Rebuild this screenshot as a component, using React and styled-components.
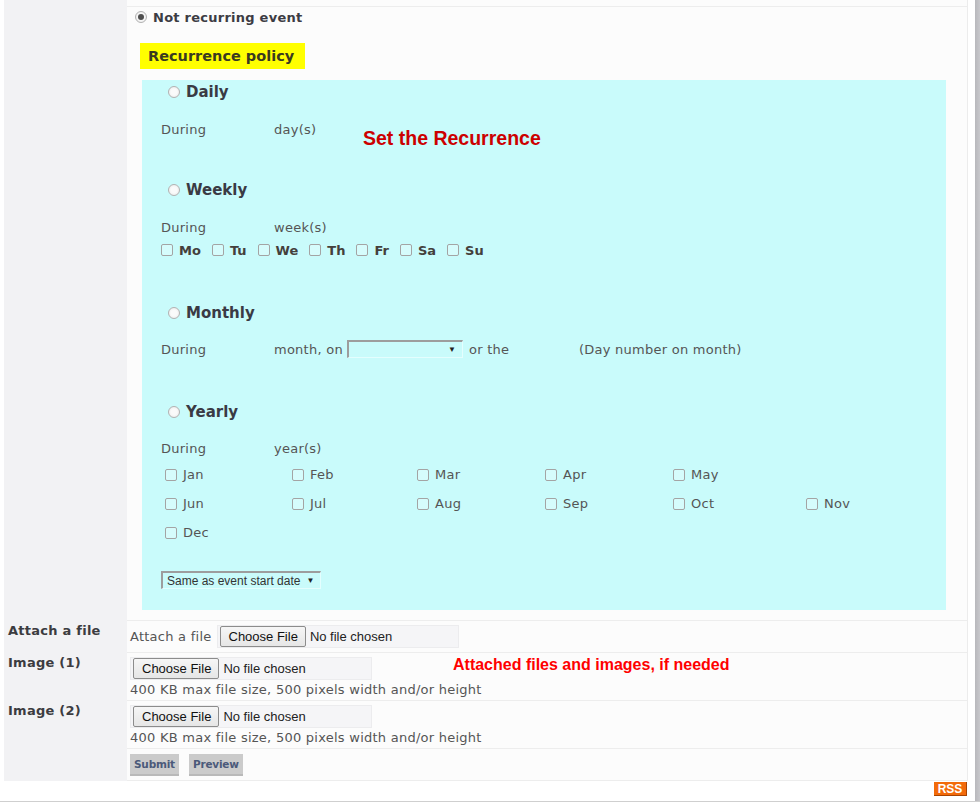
import React from "react";
import styled, { createGlobalStyle } from "styled-components";

const GlobalStyle = createGlobalStyle`
  html, body {
    margin: 0;
    padding: 0;
    background: #fff;
  }
  body {
    font-family: "DejaVu Sans", Verdana, sans-serif;
    font-size: 13px;
    letter-spacing: 0.25px;
    color: #555;
  }
`;

const Page = styled.div`
  display: flex;
  width: 980px;
  height: 801px;
  border-bottom: 1px solid #cfcfcf;
  overflow: hidden;
`;

const Content = styled.div`
  display: flex;
  flex-direction: column;
  width: 971px;
  padding-left: 4px;
  box-sizing: border-box;
`;

const ScrollEdge = styled.div`
  width: 5px;
  margin-left: 4px;
  background: linear-gradient(to right, #b8b8bc, #c8c8cc);
`;

const Table = styled.div`
  display: grid;
  grid-template-columns: 123px 1fr;
  width: 964px;
  border-right: 1px solid #ececec;
  box-sizing: border-box;
`;

const LabelCell = styled.div`
  background: #f2f2f4;
  padding: 2px 4px 0;
  font-weight: bold;
  color: #3c3c40;
  line-height: 18px;
  height: ${(p) => (p.$h ? `${p.$h}px` : "auto")};
  box-sizing: border-box;
`;

const ValueCell = styled.div`
  background: #fcfcfc;
  border-top: ${(p) => (p.$first ? "none" : "1px solid #ededed")};
  border-bottom: ${(p) => (p.$last ? "1px solid #ededed" : "none")};
  height: ${(p) => (p.$h ? `${p.$h}px` : "auto")};
  box-sizing: border-box;
`;

const Inner = styled.div`
  padding: ${(p) => p.$pad || "0"};
  display: ${(p) => (p.$flex ? "flex" : "block")};
  align-items: ${(p) => p.$align || "stretch"};
  gap: ${(p) => p.$gap || "0"};
`;

const RadioBox = styled.input.attrs({ type: "radio" })`
  appearance: none;
  margin: 0;
  width: 12px;
  height: 12px;
  border-radius: 50%;
  border: 1px solid #b2b2b2;
  background: radial-gradient(circle, #fafafa 40%, #e6e6e6 100%);
  box-sizing: border-box;
  display: inline-grid;
  place-content: center;
  flex-shrink: 0;
  &:checked::before {
    content: "";
    width: 6px;
    height: 6px;
    border-radius: 50%;
    background: #4e4e4e;
  }
`;

const CheckBox = styled.input.attrs({ type: "checkbox" })`
  appearance: none;
  margin: 0;
  width: 12px;
  height: 12px;
  border: 1px solid #a4a4a4;
  border-radius: 2px;
  background: rgba(255, 255, 255, 0.25);
  box-sizing: border-box;
  flex-shrink: 0;
`;

const TopRadioLine = styled.label`
  display: flex;
  align-items: center;
  gap: 6px;
  height: 20px;
  padding-left: 8px;
  font-weight: bold;
  color: #3c3c44;
`;

const PolicyTag = styled.div`
  width: 165px;
  box-sizing: border-box;
  margin: 16px 0 0 13px;
  height: 26px;
  line-height: 26px;
  padding-left: 8px;
  background: #ffff00;
  font-size: 14.5px;
  font-weight: bold;
  letter-spacing: 0;
  color: #3a3a20;
`;

const CyanPanel = styled.div`
  position: relative;
  margin: 11px 0 10px 15px;
  width: 804px;
  height: 530px;
  padding-top: 1px;
  box-sizing: border-box;
  background: #c9fbfb;
`;

const Section = styled.div`
  margin-top: ${(p) => p.$mt || 0}px;
`;

const Heading = styled.label`
  display: flex;
  align-items: center;
  gap: 6px;
  height: 22px;
  padding-left: 26px;
  font-size: 15px;
  font-weight: bold;
  letter-spacing: 0;
  color: #3a3a44;
`;

const DuringRow = styled.div`
  display: flex;
  align-items: center;
  height: 18px;
  margin-top: ${(p) => (p.$mt !== undefined ? p.$mt : 17)}px;
  padding-left: 19px;
`;

const Cell = styled.span`
  display: inline-block;
  white-space: nowrap;
  width: ${(p) => (p.$w ? `${p.$w}px` : "auto")};
  margin-left: ${(p) => p.$ml || 0}px;
`;

const FakeSelect = styled.div`
  display: flex;
  align-items: center;
  justify-content: space-between;
  white-space: nowrap;
  width: ${(p) => p.$w}px;
  height: 18px;
  box-sizing: border-box;
  border-top: 2px solid #9d9d9d;
  border-left: 2px solid #9d9d9d;
  border-right: 1px solid #e4fefe;
  border-bottom: 1px solid #e4fefe;
  padding: 0 6px 0 4px;
  font-family: "Liberation Sans", Arial, sans-serif;
  font-size: 12px;
  letter-spacing: 0;
  color: #333;
  margin-top: ${(p) => p.$mt || 0}px;
  margin-left: ${(p) => p.$ml || 0}px;
`;

const Arrow = styled.span`
  font-size: 8px;
  color: #222;
  margin-left: 6px;
`;

const DaysRow = styled.div`
  display: flex;
  align-items: center;
  height: 18px;
  margin-top: 5px;
  padding-left: 19px;
`;

const DayItem = styled.label`
  display: flex;
  align-items: center;
  gap: 6px;
  margin-right: 11px;
  font-weight: bold;
  letter-spacing: 0;
  color: #44403c;
`;

const MonthsGrid = styled.div`
  display: grid;
  grid-template-columns: 127px 125px 128px 128px 133px 1fr;
  grid-auto-rows: 29px;
  margin-top: 3px;
  padding-left: 23px;
`;

const MonthItem = styled.label`
  display: flex;
  align-items: center;
  gap: 6px;
`;

const Annotation = styled.div`
  position: absolute;
  left: ${(p) => p.$x}px;
  top: ${(p) => p.$y}px;
  font-family: "Liberation Sans", Arial, sans-serif;
  font-weight: bold;
  font-size: ${(p) => p.$size}px;
  letter-spacing: 0;
  color: ${(p) => p.$color};
  white-space: nowrap;
`;

const FileBox = styled.div`
  display: flex;
  align-items: center;
  width: 242px;
  height: 23px;
  box-sizing: border-box;
  padding-left: 2px;
  background: #f5f5f7;
  border: 1px solid #ececee;
  font-family: "Liberation Sans", Arial, sans-serif;
  font-size: 13px;
  letter-spacing: 0;
  color: #222;
`;

const FileButton = styled.button`
  height: 21px;
  padding: 0 7px 0 8px;
  margin-right: 4px;
  border: 1px solid #8c8c8c;
  border-radius: 2px;
  background: linear-gradient(#f6f6f6, #e6e6e6);
  font-family: "Liberation Sans", Arial, sans-serif;
  font-size: 13px;
  color: #111;
`;

const FileLine = styled.div`
  display: flex;
  align-items: flex-start;
`;

const Hint = styled.div`
  line-height: 18px;
  margin-top: 1px;
`;

const RedNote = styled.span`
  margin-left: 81px;
  margin-top: -1px;
  line-height: 18px;
  font-family: "Liberation Sans", Arial, sans-serif;
  font-weight: bold;
  font-size: 16px;
  letter-spacing: 0;
  color: #ff0000;
`;

const ActionButton = styled.button`
  height: 22px;
  padding: 0 4px;
  border: none;
  border-bottom: 2px solid #b9b9b9;
  background: #cbcbcb;
  font-family: "DejaVu Sans", Verdana, sans-serif;
  font-size: 10.5px;
  font-weight: bold;
  letter-spacing: -0.2px;
  color: #4b5a7a;
`;

const Footer = styled.div`
  display: flex;
  justify-content: flex-end;
  padding: 1px 1px 0 0;
  width: 964px;
  box-sizing: border-box;
`;

const RssBadge = styled.span`
  display: inline-block;
  width: 33px;
  height: 14px;
  line-height: 14px;
  box-sizing: border-box;
  text-align: center;
  background: #f26a0a;
  border-bottom: 1px solid #a84300;
  border-right: 1px solid #a84300;
  font-family: "Liberation Sans", Arial, sans-serif;
  font-size: 12px;
  font-weight: bold;
  letter-spacing: 0;
  color: #fff;
`;

const weekDays = ["Mo", "Tu", "We", "Th", "Fr", "Sa", "Su"];
const monthLayout = [
  ["Jan", 1], ["Feb", 2], ["Mar", 3], ["Apr", 4], ["May", 5],
  ["Jun", 1], ["Jul", 2], ["Aug", 3], ["Sep", 4], ["Oct", 5], ["Nov", 6],
  ["Dec", 1],
];

function FileInput() {
  return (
    <FileBox>
      <FileButton type="button">Choose File</FileButton>
      No file chosen
    </FileBox>
  );
}

export default function App() {
  return (
    <>
      <GlobalStyle />
      <Page>
        <Content>
          <Table>
            <LabelCell $h={6} />
            <ValueCell $first $h={6} />

            <LabelCell />
            <ValueCell>
              <TopRadioLine>
                <RadioBox name="rec" defaultChecked />
                Not recurring event
              </TopRadioLine>
              <PolicyTag>Recurrence policy</PolicyTag>
              <CyanPanel>
                <Section>
                  <Heading>
                    <RadioBox name="rec" />
                    Daily
                  </Heading>
                  <DuringRow>
                    <Cell $w={113}>During</Cell>
                    <Cell>day(s)</Cell>
                  </DuringRow>
                </Section>
                <Annotation $x={221} $y={47} $size={19.5} $color="#cc0000">
                  Set the Recurrence
                </Annotation>

                <Section $mt={41}>
                  <Heading>
                    <RadioBox name="rec" />
                    Weekly
                  </Heading>
                  <DuringRow>
                    <Cell $w={113}>During</Cell>
                    <Cell>week(s)</Cell>
                  </DuringRow>
                  <DaysRow>
                    {weekDays.map((d) => (
                      <DayItem key={d}>
                        <CheckBox />
                        {d}
                      </DayItem>
                    ))}
                  </DaysRow>
                </Section>

                <Section $mt={43}>
                  <Heading>
                    <RadioBox name="rec" />
                    Monthly
                  </Heading>
                  <DuringRow $mt={16}>
                    <Cell $w={113}>During</Cell>
                    <Cell $w={73}>month, on</Cell>
                    <FakeSelect $w={116}>
                      <span />
                      <Arrow>▼</Arrow>
                    </FakeSelect>
                    <Cell $w={110} $ml={6}>or the</Cell>
                    <Cell>(Day number on month)</Cell>
                  </DuringRow>
                </Section>

                <Section $mt={43}>
                  <Heading>
                    <RadioBox name="rec" />
                    Yearly
                  </Heading>
                  <DuringRow $mt={16}>
                    <Cell $w={113}>During</Cell>
                    <Cell>year(s)</Cell>
                  </DuringRow>
                  <MonthsGrid>
                    {monthLayout.map(([m, col]) => (
                      <MonthItem key={m} style={{ gridColumn: col }}>
                        <CheckBox />
                        {m}
                      </MonthItem>
                    ))}
                  </MonthsGrid>
                  <FakeSelect $w={160} $mt={24} $ml={19}>
                    Same as event start date
                    <Arrow>▼</Arrow>
                  </FakeSelect>
                </Section>
              </CyanPanel>
            </ValueCell>

            <LabelCell $h={32}>Attach a file</LabelCell>
            <ValueCell $h={32}>
              <Inner $pad="4px 3px 0" $flex $align="center" $gap="5px">
                <span>Attach a file</span>
                <FileInput />
              </Inner>
            </ValueCell>

            <LabelCell $h={48}>Image (1)</LabelCell>
            <ValueCell $h={48}>
              <Inner $pad="4px 3px 0">
                <FileLine>
                  <FileInput />
                  <RedNote>Attached files and images, if needed</RedNote>
                </FileLine>
                <Hint>400 KB max file size, 500 pixels width and/or height</Hint>
              </Inner>
            </ValueCell>

            <LabelCell $h={48}>Image (2)</LabelCell>
            <ValueCell $h={48}>
              <Inner $pad="4px 3px 0">
                <FileInput />
                <Hint>400 KB max file size, 500 pixels width and/or height</Hint>
              </Inner>
            </ValueCell>

            <LabelCell $h={33} />
            <ValueCell $h={33} $last>
              <Inner $pad="5px 3px 0" $flex $gap="10px">
                <ActionButton type="button">Submit</ActionButton>
                <ActionButton type="button">Preview</ActionButton>
              </Inner>
            </ValueCell>
          </Table>
          <Footer>
            <RssBadge>RSS</RssBadge>
          </Footer>
        </Content>
        <ScrollEdge />
      </Page>
    </>
  );
}
